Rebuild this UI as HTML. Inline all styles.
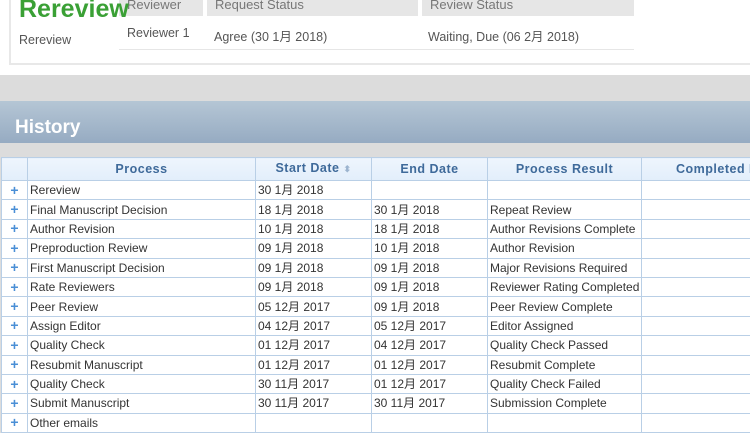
<!DOCTYPE html><html><head><style>
body{margin:0;width:750px;height:421px;overflow:hidden;background:#dcdcdc;font-family:"Liberation Sans","Noto Sans CJK SC",sans-serif;position:relative}
.a{position:absolute}
.th{background:#e6e6e6;color:#777;font-size:13px;height:16px;line-height:10px;padding-left:8px;box-sizing:border-box}
table{border-collapse:collapse;position:absolute;left:1px;top:157px;width:770px;font-size:12px;color:#333;table-layout:fixed;background:#fff}
td,th{border:1px solid #b9cfe6;height:18.4px;line-height:17px;padding:1px 0 0 2px;white-space:nowrap;overflow:hidden;box-sizing:border-box;background:#fff}
tr{height:19.4px}
tr.h{height:23px}
th{background:linear-gradient(#eef5fd,#e2eefb);color:#3f6a9a;font-size:12.5px;height:23px;letter-spacing:.5px;padding:0}
td:first-child{color:#4a8fd6;font-weight:bold;text-align:center;padding:0;font-size:14px}
</style></head><body>
<div class="a" style="left:0;top:0;width:750px;height:75px;background:#fff"></div>
<div class="a" style="left:9px;top:-2px;width:745px;height:67px;border:2px solid #e8e8e8;box-sizing:border-box"></div>
<div class="a th" style="left:119px;top:0;width:84px">Reviewer</div>
<div class="a th" style="left:207px;top:0;width:211px">Request Status</div>
<div class="a th" style="left:422px;top:0;width:212px">Review Status</div>
<div class="a" style="left:19px;top:-5px;font-size:25px;font-weight:bold;color:#3aa035">Rereview</div>
<div class="a" style="left:19px;top:33px;font-size:12.5px;color:#555">Rereview</div>
<div class="a" style="left:127px;top:26px;font-size:12.5px;color:#555">Reviewer 1</div>
<div class="a" style="left:214px;top:26px;font-size:12.5px;color:#555">Agree (30 1月 2018)</div>
<div class="a" style="left:428px;top:26px;font-size:12.5px;color:#555">Waiting, Due (06 2月 2018)</div>
<div class="a" style="left:119px;top:49px;width:515px;height:1px;background:#e6e6e6"></div>
<div class="a" style="left:0;top:101px;width:750px;height:42px;background:linear-gradient(#b5c6d5,#96abc2)"></div>
<div class="a" style="left:15px;top:117px;font-size:19px;font-weight:bold;color:#fff">History</div>
<table>
<colgroup><col style="width:26px"><col style="width:228px"><col style="width:116px"><col style="width:116px"><col style="width:154px"><col style="width:130px"></colgroup>
<tr class="h"><th></th><th>Process</th><th>Start Date <span style="color:#9cb4cf;font-size:9px">⬍</span></th><th>End Date</th><th>Process Result</th><th style="text-align:left;padding-left:34px">Completed By</th></tr>
<tr><td>+</td><td>Rereview</td><td>30 1月 2018</td><td></td><td></td><td></td></tr>
<tr><td>+</td><td>Final Manuscript Decision</td><td>18 1月 2018</td><td>30 1月 2018</td><td>Repeat Review</td><td></td></tr>
<tr><td>+</td><td>Author Revision</td><td>10 1月 2018</td><td>18 1月 2018</td><td>Author Revisions Complete</td><td></td></tr>
<tr><td>+</td><td>Preproduction Review</td><td>09 1月 2018</td><td>10 1月 2018</td><td>Author Revision</td><td></td></tr>
<tr><td>+</td><td>First Manuscript Decision</td><td>09 1月 2018</td><td>09 1月 2018</td><td>Major Revisions Required</td><td></td></tr>
<tr><td>+</td><td>Rate Reviewers</td><td>09 1月 2018</td><td>09 1月 2018</td><td>Reviewer Rating Completed</td><td></td></tr>
<tr><td>+</td><td>Peer Review</td><td>05 12月 2017</td><td>09 1月 2018</td><td>Peer Review Complete</td><td></td></tr>
<tr><td>+</td><td>Assign Editor</td><td>04 12月 2017</td><td>05 12月 2017</td><td>Editor Assigned</td><td></td></tr>
<tr><td>+</td><td>Quality Check</td><td>01 12月 2017</td><td>04 12月 2017</td><td>Quality Check Passed</td><td></td></tr>
<tr><td>+</td><td>Resubmit Manuscript</td><td>01 12月 2017</td><td>01 12月 2017</td><td>Resubmit Complete</td><td></td></tr>
<tr><td>+</td><td>Quality Check</td><td>30 11月 2017</td><td>01 12月 2017</td><td>Quality Check Failed</td><td></td></tr>
<tr><td>+</td><td>Submit Manuscript</td><td>30 11月 2017</td><td>30 11月 2017</td><td>Submission Complete</td><td></td></tr>
<tr><td>+</td><td>Other emails</td><td></td><td></td><td></td><td></td></tr>
</table>
</body></html>
